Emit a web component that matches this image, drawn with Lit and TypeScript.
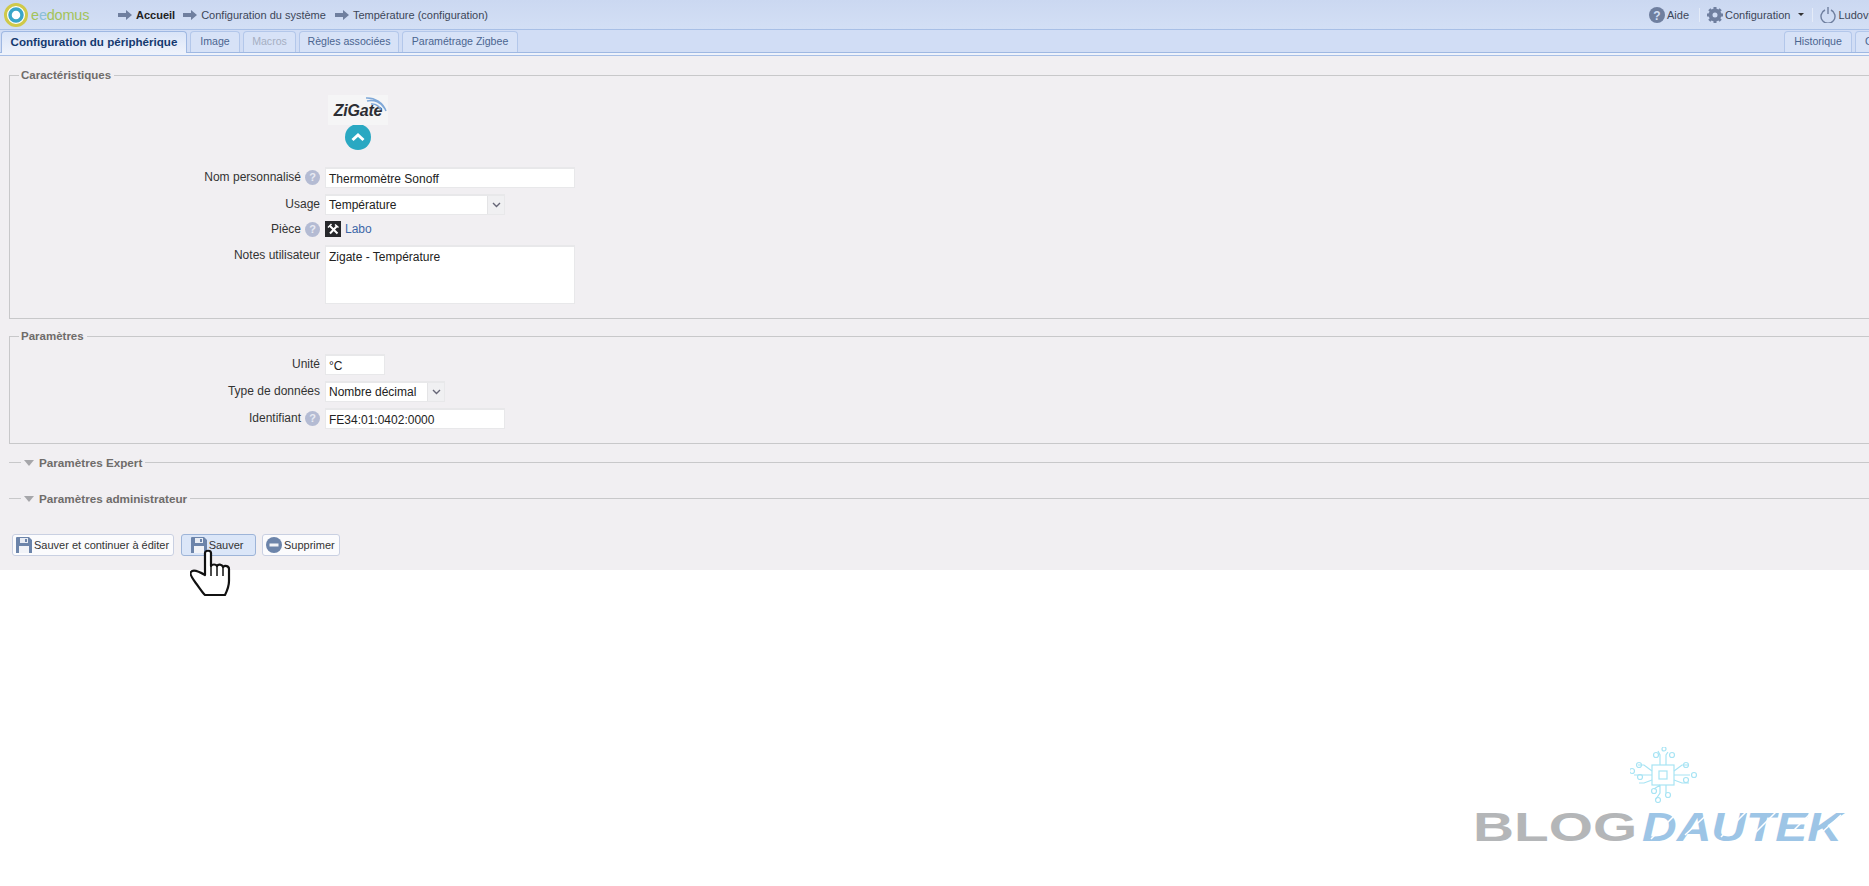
import { LitElement, html, css, svg } from "lit";
import { customElement } from "lit/decorators.js";

const arrow = html`<svg class="arrow" viewBox="0 0 14 10" width="14" height="10"><path d="M0 3h8V0l6 5-6 5V7H0z" fill="#6f7f9f"/></svg>`;
const help = html`<span class="help">?</span>`;
const floppy = svg`<path d="M1 0h12l3 3v13H0V1a1 1 0 0 1 1-1z" fill="#6c84aa"/><rect x="4" y="1" width="8" height="5" fill="#e8ecf4"/><rect x="9" y="2" width="2" height="3" fill="#6c84aa"/><rect x="3" y="9" width="10" height="7" fill="#f1f3f8"/>`;
const chevron = html`<svg width="9" height="6" viewBox="0 0 9 6" fill="none" stroke="#667" stroke-width="1.4"><path d="M1 1l3.500 3.500L8 1"/></svg>`;

@customElement("app-root")
export class AppRoot extends LitElement {
  static styles = css`
    :host { display: block; position: relative; width: 1869px; height: 886px; overflow: hidden; background: #fff;
      font-family: "Liberation Sans", Arial, sans-serif; font-size: 12px; color: #222; }
    .top { display: flex; height: 29px; box-sizing: content-box; background: linear-gradient(#cbd8f1, #d3dff5); border-bottom: 1px solid #a8bfe6; align-items: center; white-space: nowrap; }
    .left { flex: 0 0 1649px; display: flex; align-items: center; }
    .logo { display: flex; align-items: center; margin-left: 4px; gap: 3px; width: 114px; }
    .eedomus { font-size: 14.500px; color: #a3c35a; letter-spacing: -0.2px; }
    .eedomus b { font-weight: normal; color: #8cc0d8; }
    .crumb { display: flex; align-items: center; gap: 4px; font-size: 11px; color: #3c4658; margin-right: 9px; }
    .crumb.home { color: #222; font-weight: bold; margin-right: 8px; }
    .arrow { flex: none; }
    .right { flex: none; display: flex; align-items: center; font-size: 11px; color: #3c4658; }
    .right .sep { width: 1px; height: 14px; background: #e4ebf8; margin: 0 7px 0 10px; }
    .right svg { flex: none; margin-right: 2px; }
    .caret { width: 0; height: 0; border: 3px solid transparent; border-top: 3px solid #333; border-bottom: 0; margin-left: 8px; }
    .right .sep.after { margin-left: 8px; margin-right: 7px; }
    .tabs { display: flex; justify-content: space-between; height: 22px; box-sizing: content-box; background: #d1ddf5; border-bottom: 1px solid #9fb8e2; white-space: nowrap; }
    .tabgroup { display: flex; gap: 3px; padding-top: 1px; }
    .tabgroup.l { padding-left: 1px; }
    .tabgroup.r { flex: 0 0 85px; width: 85px; overflow: hidden; }
    .tab { box-sizing: border-box; height: 21px; padding: 3px 0 0; text-align: center; flex: none; font-size: 10.600px; color: #4b6590; border: 1px solid #b3c7ea; border-bottom: 0; border-radius: 4px 4px 0 0; background: #d7e2f7; }
    .tab.active { height: 22px; font-size: 11.600px; font-weight: bold; color: #15396f; background: linear-gradient(#d9e4f8, #eef2fb); border-color: #9fb8e2; }
    .tab.off { color: #a6afc2; }
    .w186 { width: 186px; } .w50 { width: 50px; } .w53 { width: 53px; } .w100 { width: 100px; } .w116 { width: 116px; } .w68 { width: 68px; }
    .tab.w80 { width: 80px; text-align: left; padding-left: 9px; }
    .strip { height: 2px; background: #eef2fb; border-bottom: 1px solid #a8bfe6; }
    .content { height: 514px; box-sizing: border-box; padding: 0 0 0 9px; background: #f1eff2; overflow: hidden; display: flow-root; }
    fieldset { width: 1900px; box-sizing: border-box; margin: 14px 0 0; padding: 0; border: 1px solid #c8c8ca; border-right: 0; }
    legend { margin-left: 9px; padding: 0 3px 0 2px; font-size: 11.500px; font-weight: bold; color: #6f6c6a; line-height: 13px; }
    fieldset.main { height: 250px; margin-top: 13px; }
    fieldset.params { height: 114px; margin-top: 11px; }
    .brand { display: flex; flex-direction: column; align-items: center; width: 60px; margin: 13px 0 0 318px; }
    .zig { position: relative; width: 60px; height: 30px; background: #f5f5f6; font: italic bold 16px "Liberation Sans", sans-serif; color: #2c2e33; line-height: 32px; text-align: center; letter-spacing: -0.2px; }
    .zig svg { position: absolute; right: 1px; top: 1px; }
    .up { width: 26px; height: 26px; border-radius: 50%; background: #2aa8c2; display: flex; align-items: center; justify-content: center; margin-top: -1px; }
    .form { display: grid; grid-template-columns: 310px auto; justify-content: start; column-gap: 5px; align-items: start; }
    .form.a { margin-top: 17px; }
    .form.b { margin-top: 11px; }
    .label { display: flex; justify-content: flex-end; align-items: center; gap: 4px; height: 20px; font-size: 12px; color: #333; }
    .label.short { height: 16px; }
    .help { display: inline-block; width: 15px; height: 15px; border-radius: 50%; background: #b4bbd3; color: #e8eaf2; font-size: 11px; font-weight: bold; line-height: 15px; text-align: center; }
    .in { box-sizing: border-box; height: 21px; padding: 3px 3px 0; background: #fff; border: 1px solid #e8e8ea; border-top-width: 2px; font-size: 12px; color: #222; white-space: nowrap; line-height: 14px; }
    .sel { display: flex; box-sizing: border-box; height: 21px; border: 1px solid #e8e8ea; border-top-width: 2px; background: #fff; }
    .sel span { flex: 1; padding: 2px 3px 0; line-height: 14px; font-size: 12px; white-space: nowrap; }
    .sel i { flex: 0 0 16px; background: #f0f0f2; display: flex; align-items: center; justify-content: center; border-left: 1px solid #e4e4e6; }
    .row { margin-bottom: 6px; }
    .room { display: flex; align-items: center; gap: 4px; height: 16px; margin-bottom: 8px; color: #3d68a8; font-size: 12px; }
    .roomicon { width: 16px; height: 16px; background: #26272a; display: flex; align-items: center; justify-content: center; }
    .area { height: 59px; }
    .w250 { width: 250px; } .w180 { width: 180px; } .w120 { width: 120px; } .w60 { width: 60px; }
    .coll { display: flex; align-items: center; height: 13px; font-size: 11.700px; font-weight: bold; color: #6f6c6a; white-space: nowrap; }
    .coll.ex { margin-top: 12px; }
    .coll.ad { margin-top: 23px; }
    .coll::after { content: ""; flex: 1; height: 1px; background: #c8c8ca; margin-left: 3px; }
    .coll::before { content: ""; width: 12px; height: 1px; background: #c8c8ca; margin-right: 3px; }
    .tri { width: 0; height: 0; border: 5px solid transparent; border-top: 6px solid #a6a6aa; border-bottom: 0; margin-right: 5px; }
    .btns { display: flex; gap: 6.500px; margin: 29px 0 0 3px; }
    .btn { box-sizing: border-box; display: flex; align-items: center; gap: 2px; height: 22px; padding: 0 4px 0 3px; background: #fbfbfd; border: 1px solid #c9d0e2; border-radius: 3px; font-size: 11px; color: #333; white-space: nowrap; }
    .btn.hot { background: #dbe6f8; border-color: #9db4d8; padding: 0 11px 0 9px; }
    .cursor { position: absolute; left: 190px; top: 549px; }
    .mark { position: absolute; left: 1476px; top: 747px; width: 372px; height: 96px; }
    .chip { position: absolute; left: 154px; top: 0; }
    .wm { position: absolute; top: 60px; font-size: 40px; line-height: 40px; font-weight: bold; white-space: nowrap; transform-origin: 0 0; }
    .blog { left: -3px; color: #b4b6b8; transform: scaleX(1.42); }
    .dautek { left: 166px; color: #9dc5e6; font-style: italic; transform: scaleX(1.2); }
    .slash { position: absolute; left: 167px; top: 58px; }
  `;

  render() {
    return html`
      <div class="top">
        <div class="left">
          <div class="logo">
            <svg width="24" height="24" viewBox="0 0 24 24"><circle cx="12" cy="12" r="10.500" fill="#fff" stroke="#cfc94a" stroke-width="3"/><circle cx="12" cy="12" r="6" fill="#fff" stroke="#3aa6c8" stroke-width="3.500"/></svg>
            <span class="eedomus">e<b>e</b>domus</span>
          </div>
          <span class="crumb home">${arrow}Accueil</span>
          <span class="crumb">${arrow}Configuration du système</span>
          <span class="crumb">${arrow}Température (configuration)</span>
        </div>
        <div class="right">
          <svg width="16" height="16" viewBox="0 0 16 16"><circle cx="8" cy="8" r="8" fill="#6f7f9f"/><text x="8" y="12.500" text-anchor="middle" font-size="12" font-weight="bold" fill="#d3dff5" font-family="Liberation Sans">?</text></svg>
          <span>Aide</span><span class="sep"></span>
          <svg width="16" height="16" viewBox="0 0 16 16"><circle cx="8" cy="8" r="4.500" fill="none" stroke="#6f7f9f" stroke-width="4"/><path d="M8 0v3M8 13v3M0 8h3M13 8h3M2.300 2.300l2 2M11.700 11.700l2 2M2.300 13.700l2-2M11.700 4.300l2-2" stroke="#6f7f9f" stroke-width="3"/></svg>
          <span>Configuration</span><span class="caret"></span><span class="sep after"></span>
          <svg width="16" height="16" viewBox="0 0 16 16" fill="none" stroke="#6f7f9f" stroke-width="1.400"><path d="M5 3a7 7 0 1 0 6 0"/><path d="M8 0v7"/></svg>
          <span>Ludovic</span>
        </div>
      </div>
      <div class="tabs">
        <div class="tabgroup l">
          <div class="tab active w186">Configuration du périphérique</div>
          <div class="tab w50">Image</div>
          <div class="tab off w53">Macros</div>
          <div class="tab w100">Règles associées</div>
          <div class="tab w116">Paramétrage Zigbee</div>
        </div>
        <div class="tabgroup r">
          <div class="tab w68">Historique</div>
          <div class="tab w80">Capteurs</div>
        </div>
      </div>
      <div class="strip"></div>
      <div class="content">
        <fieldset class="main">
          <legend>Caractéristiques</legend>
          <div class="brand">
            <div class="zig">ZiGate<svg width="22" height="20" viewBox="0 0 22 20" fill="none" stroke="#7fa8d8" stroke-width="1.500"><path d="M2 5a16 16 0 0 1 18 8M6 8a10 10 0 0 1 10 6M1 2a20 20 0 0 1 20 13"/></svg></div>
            <div class="up"><svg width="14" height="10" viewBox="0 0 14 10" fill="none" stroke="#fff" stroke-width="3"><path d="M1.500 8 7 3l5.500 5"/></svg></div>
          </div>
          <div class="form a">
            <div class="label">Nom personnalisé ${help}</div><div class="in row w250">Thermomètre Sonoff</div>
            <div class="label">Usage</div><div class="sel row w180"><span>Température</span><i>${chevron}</i></div>
            <div class="label short">Pièce ${help}</div><div class="room"><span class="roomicon"><svg width="13" height="13" viewBox="0 0 13 13" fill="none" stroke="#fff"><path d="M3 3l7.500 7.500M10 3l-7 7.500" stroke-width="2"/><path d="M1 4.500 4.500 1M8 1.500l3.500 3" stroke-width="1.500"/></svg></span>Labo</div>
            <div class="label">Notes utilisateur</div><div class="in area w250">Zigate - Température</div>
          </div>
        </fieldset>
        <fieldset class="params">
          <legend>Paramètres</legend>
          <div class="form b">
            <div class="label">Unité</div><div class="in row w60">°C</div>
            <div class="label">Type de données</div><div class="sel row w120"><span>Nombre décimal</span><i>${chevron}</i></div>
            <div class="label">Identifiant ${help}</div><div class="in w180">FE34:01:0402:0000</div>
          </div>
        </fieldset>
        <div class="coll ex"><span class="tri"></span>Paramètres Expert</div>
        <div class="coll ad"><span class="tri"></span>Paramètres administrateur</div>
        <div class="btns">
          <div class="btn"><svg width="16" height="16" viewBox="0 0 16 16">${floppy}</svg>Sauver et continuer à éditer</div>
          <div class="btn hot"><svg width="16" height="16" viewBox="0 0 16 16">${floppy}</svg>Sauver</div>
          <div class="btn"><svg width="16" height="16" viewBox="0 0 16 16"><circle cx="8" cy="8" r="8" fill="#6c84aa"/><rect x="3.500" y="6.500" width="9" height="3" fill="#f1f3f8"/></svg>Supprimer</div>
        </div>
      </div>
      <svg class="cursor" width="42" height="50" viewBox="0 0 42 50"><path d="M15 4c0-3 6-3 6 0v13c1-2 5-2 6 0 1-2 5-2 6 1 2-2 6-1 6 2v12c0 6-2 10-4 14H15c-3-3-6-8-10-13-2-3-6-8-4-10 2-3 9 0 14 3z" fill="#fff" stroke="#111" stroke-width="2.200" stroke-linejoin="round"/><path d="M21 17v10M27 17v10M33 18v9" stroke="#111" stroke-width="1.500"/></svg>
      <div class="mark">
        <svg class="chip" width="68" height="56" viewBox="0 0 68 56" fill="none" stroke="#a8e4f4" stroke-width="1.200"><rect x="22" y="18" width="22" height="20"/><rect x="29" y="24" width="8" height="8"/><path d="M22 24l-8-6H8M22 28H4M22 33l-8 3H9M44 24l8-6h6M44 28h16M44 33l8 3h7M30 18V8l-2-4M36 18V8l2-3M30 38v8l-4 6M36 38v8M30 38l-6 4"/><circle cx="34" cy="2" r="2"/><circle cx="26" cy="8" r="2.500"/><circle cx="42" cy="8" r="2.500"/><circle cx="9" cy="18" r="2.500"/><circle cx="2" cy="24" r="2.500"/><circle cx="10" cy="30" r="2.500"/><circle cx="56" cy="18" r="2.500"/><circle cx="64" cy="28" r="2.500"/><circle cx="56" cy="33" r="2.500"/><circle cx="24" cy="44" r="2.500"/><circle cx="38" cy="48" r="2.500"/><circle cx="28" cy="53" r="2.500"/></svg>
        <span class="wm blog">BLOG</span>
        <span class="wm dautek">DAUTEK</span>
        <svg class="slash" width="202" height="36" viewBox="0 0 202 36" stroke="#fff" stroke-width="1.500"><path d="M8 34 34 8M42 30 72 2M78 32 104 6M112 28 138 2M146 30 172 4M176 30 198 10"/></svg>
      </div>
    `;
  }
}
